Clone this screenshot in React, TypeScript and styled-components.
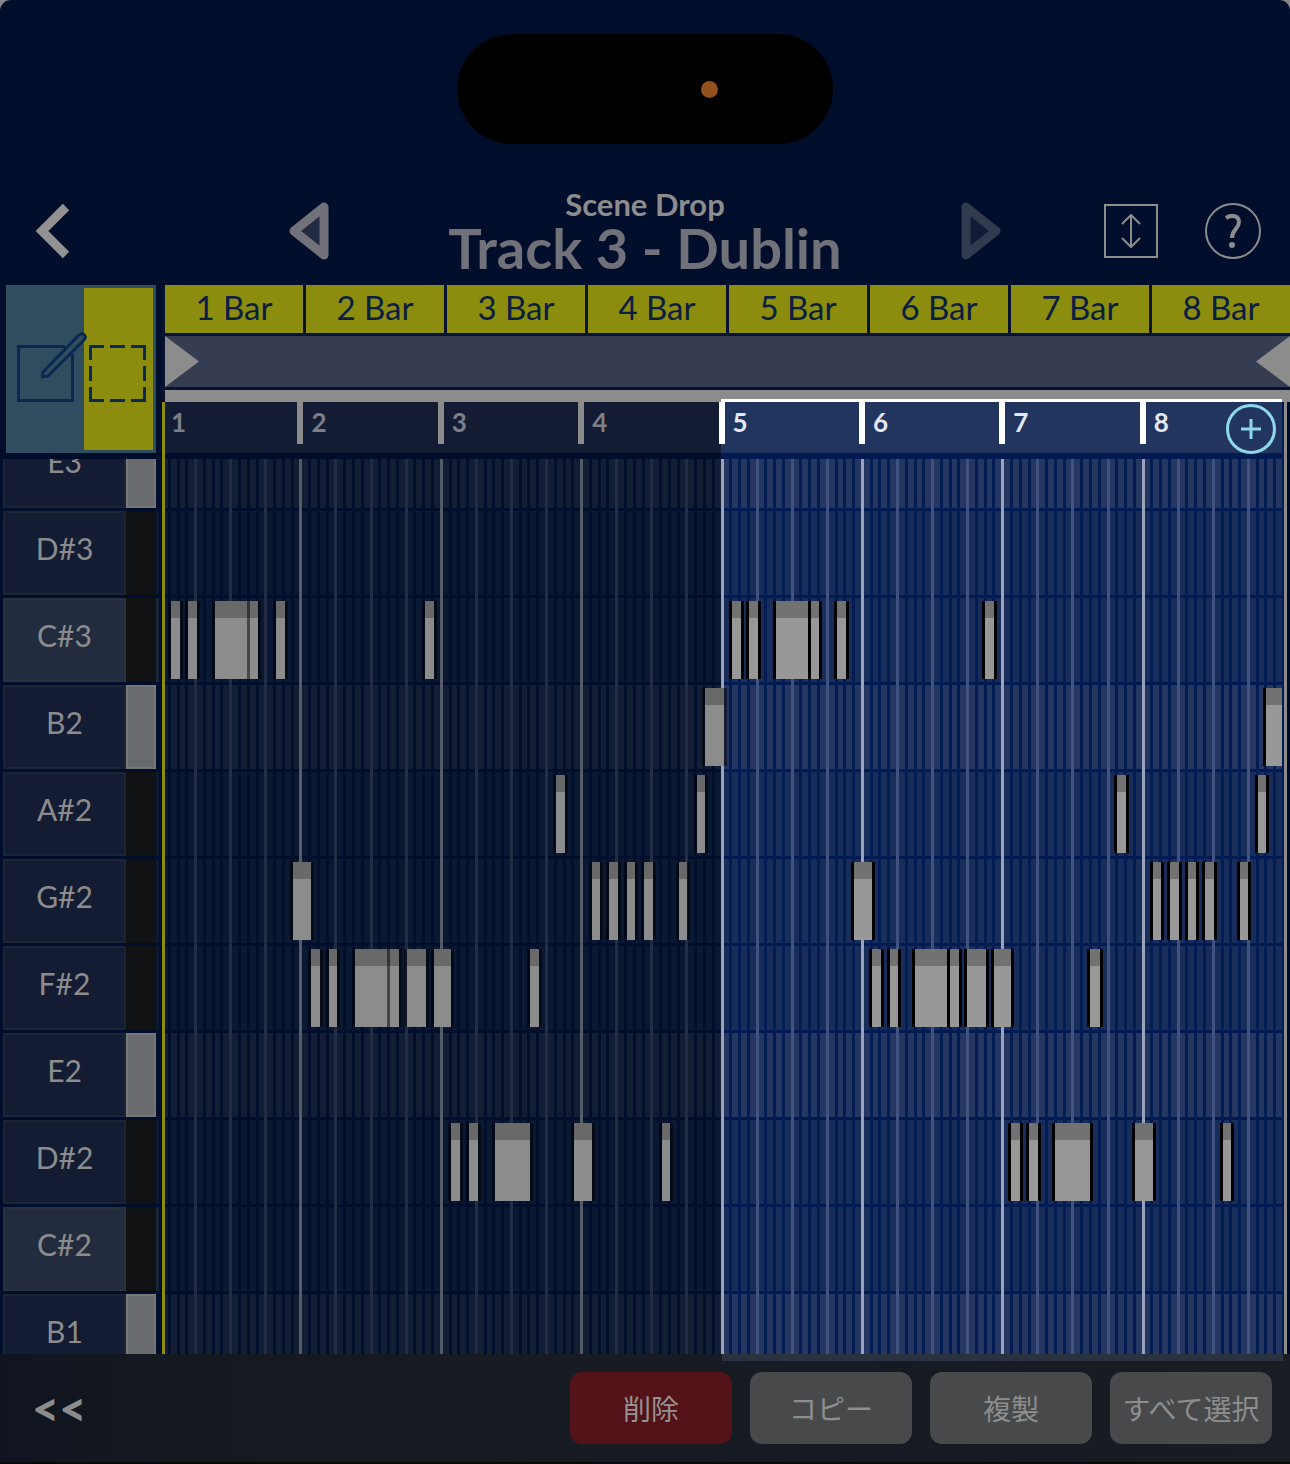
import React from "react";
import styled, { createGlobalStyle } from "styled-components";

const PAGE = "#000d2b";
const LIT = "#001b52";
const GRAY = "#8c8c8c";
const YELLOW = "#8c8c0e";

const GlobalStyle = createGlobalStyle`
  *, *::before, *::after { box-sizing: border-box; }
  body { margin: 0; background: #84868a; }
  button { border: 0; padding: 0; background: none; color: inherit; font: inherit; cursor: pointer; }
  svg { display: block; overflow: visible; }
`;

const Screen = styled.div`
  display: flex;
  flex-direction: column;
  height: 100vh;
  overflow: hidden;
  border-radius: 11px 11px 0 0;
  background: ${PAGE};
  color: ${GRAY};
  font-family: Lato, "Liberation Sans", "Noto Sans CJK JP", sans-serif;
`;

const StatusArea = styled.div`
  display: flex;
  justify-content: center;
  padding-top: 34px;
`;

const Island = styled.div`
  display: flex;
  align-items: center;
  justify-content: flex-end;
  width: 376px;
  height: 110px;
  padding-right: 115px;
  border-radius: 55px;
  background: #000;
`;

const MicDot = styled.span`
  width: 17px;
  height: 17px;
  border-radius: 50%;
  background: #92501c;
`;

const Header = styled.header`
  display: grid;
  grid-template-columns: 1fr minmax(0, 712px) 1fr;
  align-items: center;
  height: 141px;
  padding: 33px 29px 0;
`;

const HeaderStart = styled.div`
  display: flex;
  padding-left: 7px;
`;

const TrackSwitch = styled.div`
  display: flex;
  align-items: center;
  justify-content: space-between;
`;

const HeaderActions = styled.div`
  display: flex;
  align-items: center;
  justify-content: flex-end;
  gap: 47px;
`;

const IconButton = styled.button`
  display: block;
  flex: none;
`;

const Titles = styled.div`
  padding-bottom: 4px;
  text-align: center;
`;

const SceneName = styled.div`
  font-size: 31px;
  font-weight: 700;
  line-height: 38px;
`;

const TrackName = styled.h1`
  margin: 0;
  color: #717279;
  font-size: 56px;
  font-weight: 700;
  line-height: 50px;
  white-space: nowrap;
`;

const Editor = styled.main`
  display: grid;
  grid-template-columns: 159px minmax(0, 1fr);
  flex: 1;
  min-height: 0;
`;

const Side = styled.div`
  display: flex;
  flex-direction: column;
  min-height: 0;
`;

const Tools = styled.div`
  display: grid;
  grid-template-columns: 75px 69px;
  flex: none;
  height: 168px;
  margin: 0 3px 6px 6px;
  padding: 3px;
  background: #2f4d5e;
`;

const ToolButton = styled.button<{ $active?: boolean }>`
  display: flex;
  align-items: center;
  justify-content: center;
  padding: 9px 3px 0 0;
  background: ${(p) => (p.$active ? YELLOW : "transparent")};
  color: #0a2850;
  svg { position: relative; z-index: 1; }
`;

const Keys = styled.div`
  flex: 1;
  min-height: 0;
  overflow: hidden;
  padding-left: 3px;
`;

const Scrolled = styled.div`
  margin-top: -35px;
`;

const Key = styled.button<{ $root?: boolean; $black?: boolean }>`
  display: grid;
  grid-template-columns: 123px 30px 3px;
  width: 100%;
  height: 84px;
  margin-bottom: 3px;
  background: ${(p) => (p.$root ? "#1a273b" : p.$black ? "#0d1930" : PAGE)};
`;

const KeyName = styled.span<{ $root?: boolean }>`
  display: block;
  height: 84px;
  border: 2px solid ${(p) => (p.$root ? "#28313d" : "#1c2536")};
  background: ${(p) => (p.$root ? "#232c3e" : "#131c33")};
  font-size: 30px;
  line-height: 70px;
`;

const KeyCap = styled.span<{ $black?: boolean }>`
  height: 84px;
  border: 2px solid ${(p) => (p.$black ? "#101112" : "#76777a")};
  background: ${(p) => (p.$black ? "#111214" : "#696a6e")};
`;

const Timeline = styled.div`
  display: flex;
  flex-direction: column;
  min-width: 0;
  min-height: 0;
`;

const Song = styled.div`
  margin-left: 3px;
  padding-left: 3px;
  background: #08142f;
`;

const BarTabs = styled.div`
  display: grid;
  grid-template-columns: repeat(8, minmax(0, 1fr));
  gap: 3px;
`;

const BarTab = styled.button`
  height: 48px;
  padding-bottom: 3px;
  background: ${YELLOW};
  color: #0a1e44;
  font-size: 33px;
  line-height: 45px;
`;

const LoopRange = styled.div`
  display: flex;
  justify-content: space-between;
  margin: 3px 0;
  background: #363d52;
`;

const LoopEdge = styled.button`
  display: block;
`;

const TopRule = styled.div`
  height: 9px;
  background: ${GRAY};
`;

const Score = styled.div`
  display: flex;
  flex: 1;
  min-height: 0;
`;

const ScoreMain = styled.div`
  position: relative;
  display: flex;
  flex-direction: column;
  flex: 1;
  min-width: 0;
`;

const ScoreEnd = styled.div`
  flex: none;
  width: 8px;
  border-top: 3px solid ${GRAY};
  background: linear-gradient(90deg, ${LIT} 2px, ${GRAY} 2px 5px, #000a22 5px);
`;

const Playhead = styled.div`
  position: absolute;
  top: 0;
  bottom: 0;
  left: 3px;
  width: 3px;
  background: linear-gradient(${PAGE} 3px, ${YELLOW} 3px);
  box-shadow: -3px 0 ${PAGE};
`;

const Ruler = styled.div`
  display: grid;
  grid-template-columns: repeat(8, minmax(0, 1fr));
`;

const RulerBar = styled.div<{ $lit: boolean }>`
  display: flex;
  height: 60px;
  border-top: 3px solid ${(p) => (p.$lit ? "#fff" : GRAY)};
  border-bottom: 6px solid ${(p) => (p.$lit ? LIT : PAGE)};
  background: ${(p) => (p.$lit ? "#22355f" : "#131c33")};
  color: ${(p) => (p.$lit ? "#e4e8f2" : "#7c7f88")};
  font-size: 26px;
  font-weight: 700;
  line-height: 40px;
`;

const Tick = styled.span<{ $lit: boolean; $hidden: boolean }>`
  width: 6px;
  height: 42px;
  margin: 0 8px 0 -2px;
  background: ${(p) => (p.$hidden ? "transparent" : p.$lit ? "#fff" : GRAY)};
`;

const AddButton = styled.button`
  position: absolute;
  top: 5px;
  right: 6px;
`;

const Canvas = styled.div`
  display: grid;
  flex: 1;
  min-height: 0;
  overflow: hidden;
`;

const Layer = styled.div`
  grid-area: 1 / 1;
  min-width: 0;
  margin-top: -35px;
`;

const LaneBackground = styled.div<{ $black: boolean }>`
  display: grid;
  grid-template-columns: 1fr 1fr;
  height: 87px;
  & > :first-child {
    background: ${(p) => (p.$black ? "#0b1831" : "#131d33")};
    border-bottom: 3px solid ${PAGE};
  }
  & > :last-child {
    background: ${(p) => (p.$black ? "#182d5a" : "#253760")};
    border-bottom: 3px solid ${LIT};
  }
`;

const Steps = styled.div`
  grid-area: 1 / 1;
  display: grid;
  grid-template-columns: repeat(128, minmax(0, 1fr));
`;

const stepColor = {
  dim: { bar: "#565b68", beat: "#222c44", step: "#010f2d" },
  lit: { bar: "#9aa3bc", beat: "#40527f", step: "#021d54" },
};

const Step = styled.span<{ $kind: "bar" | "beat" | "step"; $lit: boolean }>`
  border-left: 3px solid ${(p) => stepColor[p.$lit ? "lit" : "dim"][p.$kind]};
`;

const Lane = styled.div`
  position: relative;
  height: 87px;
`;

const Note = styled.div<{ $lit: boolean }>`
  position: absolute;
  top: 3px;
  height: 78px;
  border-top: 17px solid ${(p) => (p.$lit ? "#727272" : "#696969")};
  background: ${(p) => (p.$lit ? "#989898" : "#8c8c8c")};
  &::before, &::after {
    content: "";
    position: absolute;
    top: -17px;
    bottom: 0;
    width: 3px;
    background: ${(p) => (p.$lit ? "#000" : "rgba(0, 0, 0, 0.5)")};
  }
  &::before { right: 100%; }
  &::after { left: 100%; }
`;

const Footer = styled.footer`
  flex: none;
  border-bottom: 2px solid #08090b;
  background: linear-gradient(90deg, #0f1420, #14181f 12%, #171b22 45%, #161a22 70%, #1a1c23);
`;

const SelectionShelf = styled.div`
  height: 7px;
  margin: 0 7px 0 56%;
  background: #2a313f;
`;

const FooterRow = styled.div`
  display: flex;
  align-items: center;
  gap: 18px;
  padding: 11px 18px 18px 32px;
`;

const Collapse = styled.button`
  margin-right: auto;
  font-size: 47px;
  font-weight: 900;
  line-height: 72px;
`;

const ActionButton = styled.button<{ $danger?: boolean }>`
  width: 162px;
  height: 72px;
  padding-bottom: 1px;
  border-radius: 12px;
  background: ${(p) => (p.$danger ? "#521218" : "#48494b")};
  color: ${(p) => (p.$danger ? "#979090" : "#8e8e8e")};
  font-family: "Noto Sans CJK JP", sans-serif;
  font-size: 28px;
  white-space: nowrap;
`;

const BARS = [1, 2, 3, 4, 5, 6, 7, 8];
const KEYS = ["E3", "D#3", "C#3", "B2", "A#2", "G#2", "F#2", "E2", "D#2", "C#2", "B1"];

// Notes of the four-bar phrase as [start, length] in ticks, 140 ticks to a bar.
const PHRASE: Record<string, [number, number][]> = {
  "C#3": [[12, 9], [29, 9], [56, 35], [91, 8], [117, 9], [265, 9]],
  B2: [[545, 18]],
  "A#2": [[396, 9], [537, 8]],
  "G#2": [[134, 18], [432, 8], [449, 9], [467, 8], [484, 9], [519, 8]],
  "F#2": [[152, 9], [170, 8], [195, 35], [230, 9], [247, 19], [274, 17], [370, 9]],
  "D#2": [[291, 9], [309, 9], [335, 35], [414, 18], [502, 8]],
};
const REPEAT_AFTER = 559;
const TOTAL_TICKS = 1120;

const percent = (ticks: number) => `${(ticks / TOTAL_TICKS) * 100}%`;

function NoteLane({ name }: { name: string }) {
  const phrase = PHRASE[name] ?? [];
  return (
    <Lane>
      {[0, 1].map((pass) =>
        phrase.map(([start, length]) => (
          <Note
            key={`${pass}-${start}`}
            $lit={pass === 1}
            style={{ left: percent(start + pass * REPEAT_AFTER), width: percent(length) }}
          />
        ))
      )}
    </Lane>
  );
}

export default function App() {
  return (
    <Screen>
      <GlobalStyle />
      <StatusArea>
        <Island>
          <MicDot />
        </Island>
      </StatusArea>

      <Header>
        <HeaderStart>
          <IconButton aria-label="Back">
            <svg width="33" height="54" viewBox="0 0 33 54" fill="none" stroke="#929292" strokeWidth="9">
              <path d="M30 3 L6 27 L30 51" />
            </svg>
          </IconButton>
        </HeaderStart>
        <TrackSwitch>
          <IconButton aria-label="Previous track">
            <svg width="40" height="58" viewBox="0 0 40 58" fill="#232b42" stroke="#717279" strokeWidth="9" strokeLinejoin="round">
              <path d="M35 5 V53 L5 29 Z" />
            </svg>
          </IconButton>
          <Titles>
            <SceneName>Scene Drop</SceneName>
            <TrackName>Track 3 - Dublin</TrackName>
          </Titles>
          <IconButton aria-label="Next track">
            <svg width="40" height="58" viewBox="0 0 40 58" fill="#101b37" stroke="#323a4f" strokeWidth="9" strokeLinejoin="round">
              <path d="M5 5 V53 L35 29 Z" />
            </svg>
          </IconButton>
        </TrackSwitch>
        <HeaderActions>
          <IconButton aria-label="Row height">
            <svg width="54" height="54" viewBox="0 0 54 54" fill="none" stroke="#8c8c8c" strokeWidth="2">
              <rect x="1" y="1" width="52" height="52" />
              <path d="M27 11 V43 M18 20 L27 11 L36 20 M18 34 L27 43 L36 34" />
            </svg>
          </IconButton>
          <IconButton aria-label="Help">
            <svg width="56" height="56" viewBox="0 0 56 56" fill="none" stroke="#8c8c8c">
              <circle cx="28" cy="28" r="27" strokeWidth="2" />
              <path d="M21 15 C27 11 34 13 34 19 C34 26 27 26 27 35" strokeWidth="4" />
              <circle cx="27" cy="42" r="3" fill="#8c8c8c" stroke="none" />
            </svg>
          </IconButton>
        </HeaderActions>
      </Header>

      <Editor>
        <Side>
          <Tools>
            <ToolButton aria-label="Draw notes">
              <svg width="57" height="57" viewBox="0 0 57 57" fill="none" stroke="currentColor" strokeWidth="3">
                <path d="M48 1.5 H1.5 V55.5 H55.5 V9" />
                <path d="M26 27 L62 -10 Q66 -13 68 -9 Q69 -7 67 -5 L31 31 L25.500 31.500 Z" strokeWidth="3" fill="#2f4d5e" />
              </svg>
            </ToolButton>
            <ToolButton $active aria-label="Select notes">
              <svg width="57" height="57" viewBox="0 0 57 57" fill="none" stroke="currentColor" strokeWidth="3">
                <path d="M1.500 15 V1.500 H15 M21 1.500 H36 M42 1.500 H55.500 V15 M55.500 21 V36 M55.500 42 V55.500 H42 M36 55.500 H21 M15 55.500 H1.500 V42 M1.500 36 V21" />
              </svg>
            </ToolButton>
          </Tools>
          <Keys>
            <Scrolled>
              {KEYS.map((name) => {
                const black = name.includes("#");
                const root = name.startsWith("C#");
                return (
                  <Key key={name} $root={root} $black={black}>
                    <KeyName $root={root}>{name}</KeyName>
                    <KeyCap $black={black} />
                  </Key>
                );
              })}
            </Scrolled>
          </Keys>
        </Side>

        <Timeline>
          <Song>
            <BarTabs>
              {BARS.map((bar) => (
                <BarTab key={bar}>{bar} Bar</BarTab>
              ))}
            </BarTabs>
            <LoopRange>
              <LoopEdge aria-label="Loop start">
                <svg width="34" height="51" viewBox="0 0 34 51" fill="#8c8c8c">
                  <path d="M0 0 L34 25.500 L0 51 Z" />
                </svg>
              </LoopEdge>
              <LoopEdge aria-label="Loop end">
                <svg width="34" height="51" viewBox="0 0 34 51" fill="#8c8c8c">
                  <path d="M34 0 L0 25.500 L34 51 Z" />
                </svg>
              </LoopEdge>
            </LoopRange>
            <TopRule />
          </Song>

          <Score>
            <ScoreMain>
              <Ruler>
                {BARS.map((bar) => (
                  <RulerBar key={bar} $lit={bar > 4}>
                    <Tick $lit={bar > 4} $hidden={bar === 1} />
                    {bar}
                  </RulerBar>
                ))}
              </Ruler>
              <Canvas>
                <Layer>
                  {KEYS.map((name) => (
                    <LaneBackground key={name} $black={name.includes("#")}>
                      <span />
                      <span />
                    </LaneBackground>
                  ))}
                </Layer>
                <Steps>
                  {Array.from({ length: 128 }, (_, i) => (
                    <Step key={i} $lit={i >= 64} $kind={i % 16 === 0 ? "bar" : i % 4 === 0 ? "beat" : "step"} />
                  ))}
                </Steps>
                <Layer>
                  {KEYS.map((name) => (
                    <NoteLane key={name} name={name} />
                  ))}
                </Layer>
              </Canvas>
              <Playhead />
              <AddButton aria-label="Extend selection">
                <svg width="50" height="50" viewBox="0 0 50 50" fill="none" stroke="#8fd8ea" strokeWidth="3">
                  <circle cx="25" cy="25" r="23.500" fill="#22355f" />
                  <path d="M25 15 V35 M15 25 H35" />
                </svg>
              </AddButton>
            </ScoreMain>
            <ScoreEnd />
          </Score>
        </Timeline>
      </Editor>

      <Footer>
        <SelectionShelf />
        <FooterRow>
          <Collapse aria-label="Collapse">&lt;&lt;</Collapse>
          <ActionButton $danger>削除</ActionButton>
          <ActionButton>コピー</ActionButton>
          <ActionButton>複製</ActionButton>
          <ActionButton>すべて選択</ActionButton>
        </FooterRow>
      </Footer>
    </Screen>
  );
}
